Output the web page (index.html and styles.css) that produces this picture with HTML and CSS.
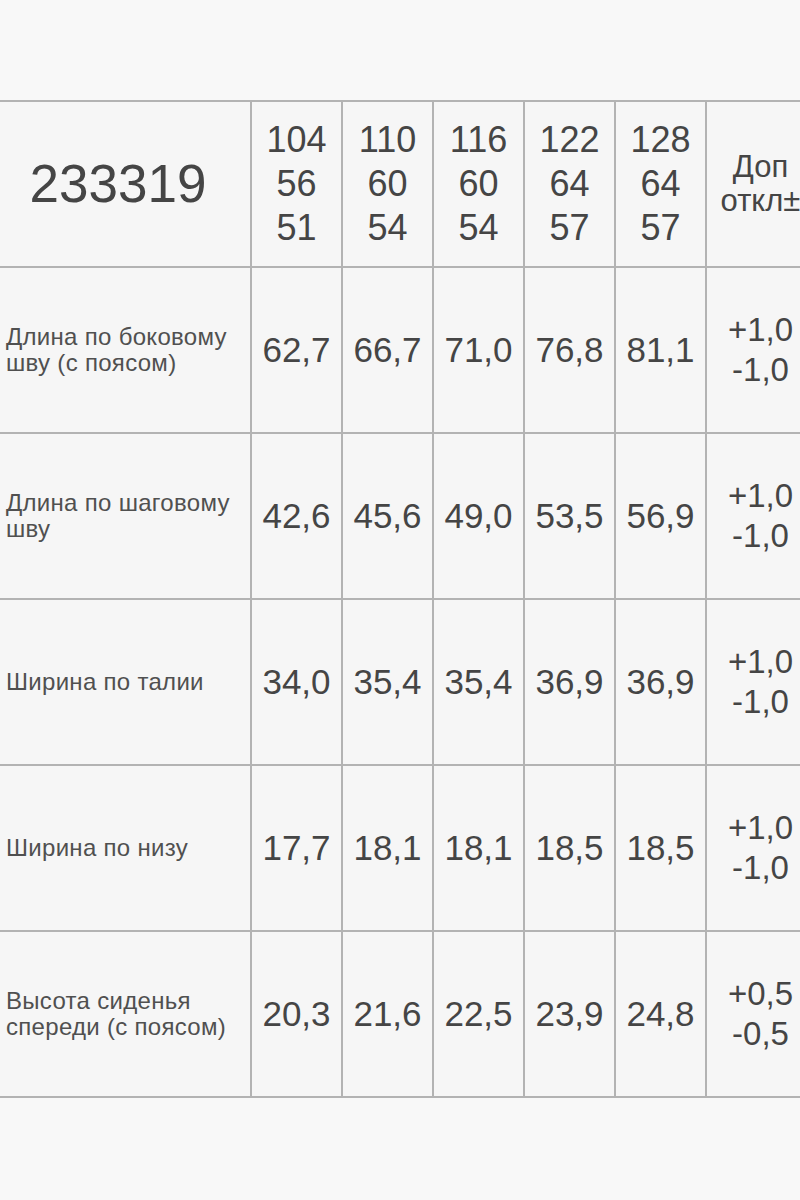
FILE: index.html
```html
<!DOCTYPE html>
<html lang="ru">
<head>
<meta charset="utf-8">
<link rel="stylesheet" href="styles.css">
</head>
<body>
<table class="sizes">
  <colgroup>
    <col class="c-label">
    <col class="c-size"><col class="c-size"><col class="c-size"><col class="c-size"><col class="c-size">
    <col class="c-tol">
  </colgroup>
  <tr class="head">
    <td class="label article">233319</td>
    <td class="num">104<br>56<br>51</td>
    <td class="num">110<br>60<br>54</td>
    <td class="num">116<br>60<br>54</td>
    <td class="num">122<br>64<br>57</td>
    <td class="num">128<br>64<br>57</td>
    <td class="tol tol-head">Доп<br>откл±</td>
  </tr>
  <tr>
    <td class="label">Длина по боковому шву (с поясом)</td>
    <td class="num">62,7</td><td class="num">66,7</td><td class="num">71,0</td><td class="num">76,8</td><td class="num">81,1</td>
    <td class="tol">+1,0<br>-1,0</td>
  </tr>
  <tr>
    <td class="label">Длина по шаговому шву</td>
    <td class="num">42,6</td><td class="num">45,6</td><td class="num">49,0</td><td class="num">53,5</td><td class="num">56,9</td>
    <td class="tol">+1,0<br>-1,0</td>
  </tr>
  <tr>
    <td class="label">Ширина по талии</td>
    <td class="num">34,0</td><td class="num">35,4</td><td class="num">35,4</td><td class="num">36,9</td><td class="num">36,9</td>
    <td class="tol">+1,0<br>-1,0</td>
  </tr>
  <tr>
    <td class="label">Ширина по низу</td>
    <td class="num">17,7</td><td class="num">18,1</td><td class="num">18,1</td><td class="num">18,5</td><td class="num">18,5</td>
    <td class="tol">+1,0<br>-1,0</td>
  </tr>
  <tr>
    <td class="label">Высота сиденья спереди (с поясом)</td>
    <td class="num">20,3</td><td class="num">21,6</td><td class="num">22,5</td><td class="num">23,9</td><td class="num">24,8</td>
    <td class="tol">+0,5<br>-0,5</td>
  </tr>
</table>
</body>
</html>
```

FILE: styles.css
```css
html, body {
  margin: 0;
  padding: 0;
  background: #f8f8f8;
  overflow: hidden;
}
body {
  width: 800px;
  height: 1200px;
  font-family: "Liberation Sans", Arial, sans-serif;
  color: #454545;
}
.sizes {
  margin-top: 100px;
  border-collapse: collapse;
  table-layout: fixed;
  width: 814px;
  background: #f6f6f6;
}
.c-label { width: 251px; }
.c-size { width: 91px; }
.c-tol { width: 108px; }
.sizes tr { height: 166px; }
.sizes td {
  border: 2px solid #b3b3b3;
  padding: 0;
  vertical-align: middle;
}
.sizes td:first-child { border-left: none; }
.sizes td:last-child { border-right: none; }
.label {
  font-size: 24px;
  line-height: 26px;
  letter-spacing: 0.3px;
  padding: 0 8px 0 6px !important;
  color: #505050;
}
.article {
  font-size: 53px;
  letter-spacing: 0;
  text-align: center;
  color: #454545;
  padding: 0 14px 0 0 !important;
}
.num {
  font-size: 35px;
  text-align: center;
  white-space: nowrap;
}
.head .num {
  font-size: 36px;
  line-height: 44px;
}
.tol {
  font-size: 33px;
  line-height: 40px;
  text-align: center;
  white-space: nowrap;
}
.tol-head {
  font-size: 31px;
  line-height: 34px;
}
```
